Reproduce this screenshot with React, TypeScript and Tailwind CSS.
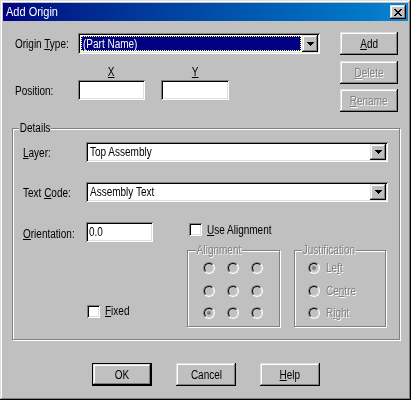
import React from "react";

const raised =
  "bg-[#c0c0c0] shadow-[inset_-1px_-1px_0_#000,inset_1px_1px_0_#dfdfdf,inset_-2px_-2px_0_#808080,inset_2px_2px_0_#fff]";
const sunken =
  "bg-white shadow-[inset_1px_1px_0_#808080,inset_-1px_-1px_0_#fff,inset_2px_2px_0_#000,inset_-2px_-2px_0_#dfdfdf]";
const etched = "border border-[#808080] shadow-[inset_1px_1px_0_#fff,1px_1px_0_#fff]";
const disabledText = "text-[#808080] [text-shadow:1px_1px_0_#fff]";

function T({ children, center, className = "" }: { children: React.ReactNode; center?: boolean; className?: string }) {
  return (
    <span
      className={`inline-block align-top whitespace-nowrap leading-[14px] scale-x-[0.8] ${center ? "origin-center" : "origin-left"} ${className}`}
    >
      {children}
    </span>
  );
}

function Arrow() {
  return (
    <svg width="7" height="4" viewBox="0 0 7 4" shapeRendering="crispEdges">
      <rect x="0" y="0" width="7" height="1" fill="#000" />
      <rect x="1" y="1" width="5" height="1" fill="#000" />
      <rect x="2" y="2" width="3" height="1" fill="#000" />
      <rect x="3" y="3" width="1" height="1" fill="#000" />
    </svg>
  );
}

function Combo({ className, text, selected }: { className: string; text: string; selected?: boolean }) {
  return (
    <div className={`flex p-[2px] ${sunken} ${className}`}>
      {selected ? (
        <div className="flex-1 flex items-center p-[1px]">
          <div className="flex-1 h-full bg-[#000080] border border-dotted border-[#ffff80] text-white flex items-center pl-[1px]">
            <T>{text}</T>
          </div>
        </div>
      ) : (
        <div className="flex-1 flex items-center pl-[2px]">
          <T>{text}</T>
        </div>
      )}
      <div className={`w-[16px] flex items-center justify-center ${raised}`}>
        <Arrow />
      </div>
    </div>
  );
}

function Btn({
  children,
  className = "",
  disabled,
  def,
}: {
  children: React.ReactNode;
  className?: string;
  disabled?: boolean;
  def?: boolean;
}) {
  return (
    <div
      className={`h-[23px] flex items-center justify-center ${raised} ${def ? "border border-black" : ""} ${
        disabled ? disabledText : ""
      } ${className}`}
    >
      <T center>{children}</T>
    </div>
  );
}

function Check() {
  return <div className={`w-[13px] h-[13px] shrink-0 ${sunken}`} />;
}

function Radio({ checked }: { checked?: boolean }) {
  return (
    <div className="w-[12px] h-[12px] shrink-0 rounded-full border border-t-[#808080] border-l-[#808080] border-r-white border-b-white">
      <div className="w-full h-full rounded-full border border-t-black border-l-black border-r-[#dfdfdf] border-b-[#dfdfdf] bg-[#c0c0c0] flex items-center justify-center">
        {checked && <div className="w-[4px] h-[4px] rounded-full bg-[#808080]" />}
      </div>
    </div>
  );
}

function RadioRow({ checked }: { checked?: boolean }) {
  return (
    <div className="flex gap-x-[12px]">
      <Radio checked={checked} />
      <Radio />
      <Radio />
    </div>
  );
}

export default function App() {
  return (
    <div className="w-[411px] h-[400px] bg-[#c0c0c0] overflow-hidden text-[12.5px] leading-[14px] text-black [font-family:'Liberation_Sans',Arial,sans-serif] shadow-[inset_-1px_-1px_0_#000,inset_1px_1px_0_#dfdfdf,inset_-2px_-2px_0_#808080,inset_2px_2px_0_#fff] pt-[3px]">
      {/* Title bar */}
      <div className="mx-[3px] h-[18px] bg-linear-to-r from-[#000080] to-[#1084d0] flex items-start justify-between">
        <div className="pl-[3px] pt-[2px] text-white text-[12.5px]">
          <span className="inline-block whitespace-nowrap leading-[14px] scale-x-[0.88] origin-left">Add Origin</span>
        </div>
        <div className={`mt-[2px] mr-[2px] w-[16px] h-[14px] flex items-center justify-center ${raised}`}>
          <svg width="8" height="7" viewBox="0 0 8 7" shapeRendering="crispEdges">
            <path d="M0 0h2v1h1v1h2v-1h1v-1h2v1h-1v1h-1v1h-1v1h1v1h1v1h1v1h-2v-1h-1v-1h-2v1h-1v1h-2v-1h1v-1h1v-1h1v-1h-1v-1h-1v-1h-1z" fill="#000" />
          </svg>
        </div>
      </div>

      {/* Top section */}
      <div className="flex mt-[11px] pl-[15px] items-start">
        <div className="w-[305px] mt-[1px]">
          <div className="flex items-center h-[21px]">
            <div className="w-[63px] pt-[1px]">
              <T>
                Origin <u>T</u>ype:
              </T>
            </div>
            <Combo className="w-[242px] h-[21px]" text="(Part Name)" selected />
          </div>
          <div className="flex mt-[11px] pl-[63px] h-[14px]">
            <div className="w-[67px] text-center">
              <T center>
                <u>X</u>
              </T>
            </div>
            <div className="w-[68px] ml-[16px] text-center">
              <T center>
                <u>Y</u>
              </T>
            </div>
          </div>
          <div className="flex items-center mt-[1px] h-[20px]">
            <div className="w-[63px] pt-[2px]">
              <T>Position:</T>
            </div>
            <div className={`w-[67px] h-[20px] ${sunken}`} />
            <div className={`w-[68px] h-[20px] ml-[16px] ${sunken}`} />
          </div>
        </div>
        <div className="ml-[20px] w-[58px] flex flex-col">
          <Btn>
            <u>A</u>dd
          </Btn>
          <Btn disabled className="mt-[6px]">
            <u>D</u>elete
          </Btn>
          <Btn disabled className="mt-[5px]">
            <u>R</u>ename
          </Btn>
        </div>
      </div>

      {/* Details group */}
      <div className={`relative mt-[16px] ml-[12px] w-[388px] h-[212px] ${etched}`}>
        <div className="absolute left-[6px] -top-[8px] px-[1px] bg-[#c0c0c0] leading-[14px] whitespace-nowrap scale-x-[0.8] origin-left">
          Details
        </div>
        <div className="pl-[10px] pt-[13px]">
          <div className="flex items-center h-[20px]">
            <div className="w-[63px] pt-[2px]">
              <T>
                <u>L</u>ayer:
              </T>
            </div>
            <Combo className="w-[302px] h-[20px]" text="Top Assembly" />
          </div>
          <div className="flex items-center h-[20px] mt-[20px]">
            <div className="w-[63px] pt-[2px]">
              <T>
                Text <u>C</u>ode:
              </T>
            </div>
            <Combo className="w-[302px] h-[20px]" text="Assembly Text" />
          </div>
          <div className="flex items-start h-[20px] mt-[20px]">
            <div className="w-[63px] h-[20px] pt-[5px]">
              <T>
                <u>O</u>rientation:
              </T>
            </div>
            <div className={`w-[67px] h-[20px] flex items-center pl-[3px] ${sunken}`}>
              <T>0.0</T>
            </div>
            <div className="flex items-center ml-[36px] mt-[1px] h-[13px]">
              <Check />
              <div className="ml-[5px]">
                <T>
                  <u>U</u>se Alignment
                </T>
              </div>
            </div>
          </div>
          <div className="flex mt-[8px] items-start">
            <div className="w-[164px] pl-[64px] pt-[54px] flex items-center">
              <Check />
              <div className="ml-[5px]">
                <T>
                  <u>F</u>ixed
                </T>
              </div>
            </div>
            <div className={`relative w-[93px] h-[77px] ${etched}`}>
              <div
                className={`absolute left-[8px] -top-[8px] px-[1px] bg-[#c0c0c0] leading-[14px] whitespace-nowrap scale-x-[0.8] origin-left ${disabledText}`}
              >
                Alignment
              </div>
              <div className="pl-[15px] pt-[11px] flex flex-col">
                <RadioRow />
                <div className="mt-[11px]">
                  <RadioRow />
                </div>
                <div className="mt-[10px]">
                  <RadioRow checked />
                </div>
              </div>
            </div>
            <div className={`relative ml-[14px] w-[92px] h-[77px] ${etched}`}>
              <div
                className={`absolute left-[7px] -top-[8px] px-[1px] bg-[#c0c0c0] leading-[14px] whitespace-nowrap scale-x-[0.8] origin-left ${disabledText}`}
              >
                Justification
              </div>
              <div className="pl-[13px] pt-[11px] flex flex-col">
                <div className="flex items-center h-[12px]">
                  <Radio checked />
                  <span className={`ml-[6px] ${disabledText}`}>
                    <T>
                      Le<u>f</u>t
                    </T>
                  </span>
                </div>
                <div className="flex items-center h-[12px] mt-[11px]">
                  <Radio />
                  <span className={`ml-[6px] ${disabledText}`}>
                    <T>
                      Ce<u>n</u>tre
                    </T>
                  </span>
                </div>
                <div className="flex items-center h-[12px] mt-[10px]">
                  <Radio />
                  <span className={`ml-[6px] ${disabledText}`}>
                    <T>
                      R<u>i</u>ght
                    </T>
                  </span>
                </div>
              </div>
            </div>
          </div>
        </div>
      </div>

      {/* Bottom buttons */}
      <div className="flex mt-[23px] pl-[92px] gap-[24px]">
        <Btn def className="w-[60px]">
          OK
        </Btn>
        <Btn className="w-[60px]">Cancel</Btn>
        <Btn className="w-[60px]">
          <u>H</u>elp
        </Btn>
      </div>
    </div>
  );
}
